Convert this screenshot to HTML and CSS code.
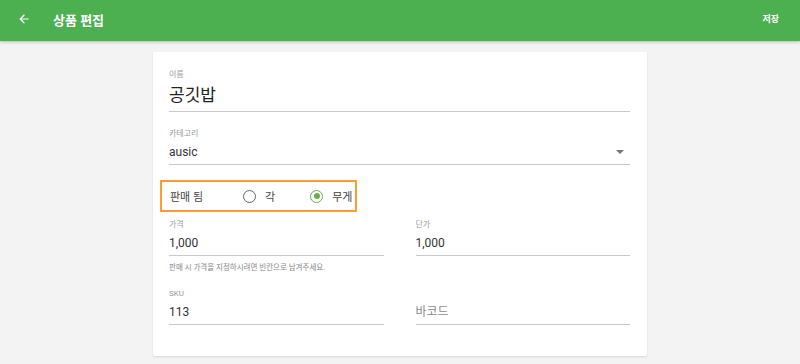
FILE: index.html
```html
<!DOCTYPE html>
<html lang="ko">
<head>
<meta charset="utf-8">
<link rel="stylesheet" href="styles.css">
</head>
<body>
<header class="appbar">
  <div class="appbar-left">
    <svg class="back" width="14" height="14" viewBox="0 0 24 24"><path d="M20 11H7.83l5.59-5.59L12 4l-8 8 8 8 1.41-1.41L7.83 13H20v-2z" fill="#fff"/></svg>
    <span class="title">상품 편집</span>
  </div>
  <span class="save">저장</span>
</header>
<main class="main">
  <section class="card">
    <div class="field f-name">
      <span class="label">이름</span>
      <span class="value big">공깃밥</span>
    </div>
    <div class="field f-cat">
      <span class="label">카테고리</span>
      <div class="select-row">
        <span class="value">ausic</span>
        <svg class="caret" width="8" height="4" viewBox="0 0 10 5"><path d="M0 0h10L5 5z" fill="#757575"/></svg>
      </div>
    </div>
    <div class="sold-box">
      <span class="sold-label">판매 됨</span>
      <label class="radio"><span class="circle"></span><span>각</span></label>
      <label class="radio on"><span class="circle"><span class="dot"></span></span><span>무게</span></label>
    </div>
    <div class="row r-price">
      <div class="field col">
        <span class="label">가격</span>
        <span class="value">1,000</span>
      </div>
      <div class="field col">
        <span class="label">단가</span>
        <span class="value">1,000</span>
      </div>
    </div>
    <p class="helper">판매 시 가격을 지정하시려면 빈칸으로 남겨주세요.</p>
    <div class="row r-sku">
      <div class="field col">
        <span class="label">SKU</span>
        <span class="value">113</span>
      </div>
      <div class="field col">
        <span class="label"></span>
        <span class="value placeholder">바코드</span>
      </div>
    </div>
  </section>
</main>
</body>
</html>
```

FILE: styles.css
```css
* { box-sizing: border-box; }
html, body { margin: 0; padding: 0; }
body {
  width: 800px;
  height: 364px;
  overflow: hidden;
  background: #f3f3f3;
  font-family: Roboto, "Noto Sans CJK KR", sans-serif;
  color: #333;
}
.appbar {
  height: 41px;
  background: #4caf50;
  display: flex;
  align-items: center;
  justify-content: space-between;
  padding: 0 21px 0 16px;
  box-shadow: 0 1px 3px rgba(0,0,0,0.25);
  position: relative;
}
.appbar-left { display: flex; align-items: center; }
.back { margin-left: 1px; margin-top: -3px; }
.title {
  color: #fff;
  font-size: 13px;
  font-weight: 700;
  margin-left: 22px;
  margin-top: -3px;
}
.save {
  color: #fff;
  font-size: 9px;
  font-weight: 700;
  margin-top: -5px;
}
.main {
  display: flex;
  justify-content: center;
  padding-top: 11px;
}
.card {
  width: 494px;
  height: 304px;
  background: #fff;
  box-shadow: 0 1px 2px rgba(0,0,0,0.12);
  border-radius: 2px;
  padding: 17px 17px 0 16px;
  display: flex;
  flex-direction: column;
}
.field {
  display: flex;
  flex-direction: column;
  border-bottom: 1px solid #c9c9c9;
}
.label {
  font-size: 8px;
  line-height: 12px;
  height: 12px;
  color: #9a9a9a;
}
.value {
  font-size: 12px;
  line-height: 18px;
  color: #333;
}
.value.big {
  font-size: 17px;
  line-height: 24px;
  color: #222;
}
.f-name { padding-bottom: 4px; }
.f-name .value { margin-top: 2px; }
.f-cat { margin-top: 16px; padding-bottom: 3px; }
.f-cat .value { margin-top: 3px; }
.select-row {
  display: flex;
  justify-content: space-between;
  align-items: center;
}
.caret { margin-right: 6px; margin-top: 2px; }
.sold-box {
  margin-top: 15px;
  margin-left: -9px;
  width: 197px;
  height: 32px;
  border: 2px solid #ff9b30;
  display: flex;
  align-items: center;
  padding-left: 8px;
  font-size: 11px;
  color: #444;
}
.sold-label { width: 73px; }
.radio {
  display: flex;
  align-items: center;
  gap: 9px;
}
.radio + .radio { margin-left: 35px; }
.circle {
  width: 13px;
  height: 13px;
  border: 1.5px solid #666;
  border-radius: 50%;
  display: flex;
  align-items: center;
  justify-content: center;
}
.radio.on .circle { border-color: #6ab04c; }
.dot {
  width: 6px;
  height: 6px;
  border-radius: 50%;
  background: #6ab04c;
}
.row {
  display: flex;
  gap: 32px;
}
.col { flex: 1; padding-bottom: 3px; }
.col .value { margin-top: 3px; }
.r-price { margin-top: 7px; }
.helper {
  margin: 6px 0 0;
  font-size: 7.5px;
  line-height: 12px;
  color: #888;
}
.r-sku { margin-top: 14px; }
.placeholder { color: #8a8a8a; }
```
